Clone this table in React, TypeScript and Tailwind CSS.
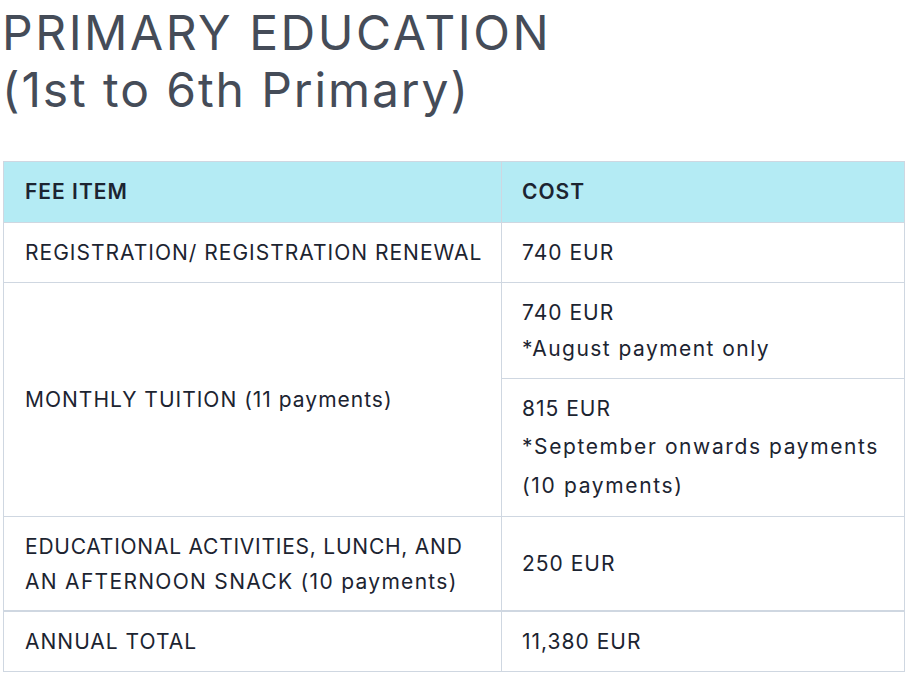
import React from "react";

const body = "font-['Inter','Liberation_Sans',sans-serif] text-[21px] tracking-[1px] text-[#1c2431]";

export default function App() {
  return (
    <div className="min-h-[678px] bg-white">
      <h1 className="mt-[4px] pl-[2px] font-['Inter','Liberation_Sans',sans-serif] text-[48px] leading-[57px] font-normal text-[#454c58]">
        <span className="tracking-[2.55px]">PRIMARY EDUCATION</span>
        <br />
        <span className="tracking-[1.9px]">(1st to 6th Primary)</span>
      </h1>
      <div className={`ml-[3px] mt-[43px] w-[902px] border border-[#cfd7e1] ${body}`}>
        <div className="flex h-[61px] border-b border-[#cfd7e1] bg-[#b4ebf4] font-semibold">
          <div className="flex w-[498px] items-center border-r border-[#cfd7e1] pl-[21px]">FEE ITEM</div>
          <div className="flex flex-1 items-center pl-[20px]">COST</div>
        </div>
        <div className="flex h-[60px] border-b border-[#cfd7e1]">
          <div className="flex w-[498px] items-center border-r border-[#cfd7e1] pl-[21px]">REGISTRATION/ REGISTRATION RENEWAL</div>
          <div className="flex flex-1 items-center pl-[20px]">740 EUR</div>
        </div>
        <div className="flex h-[234px] border-b border-[#cfd7e1]">
          <div className="flex w-[498px] items-center border-r border-[#cfd7e1] pl-[21px]">MONTHLY TUITION (11 payments)</div>
          <div className="flex flex-1 flex-col">
            <div className="flex h-[96px] flex-col justify-center border-b border-[#cfd7e1] pl-[20px] leading-[36px]">
              <span>740 EUR</span>
              <span className="tracking-[1.45px]">*August payment only</span>
            </div>
            <div className="flex flex-1 flex-col justify-center pl-[20px] leading-[38.5px]">
              <span>815 EUR</span>
              <span className="tracking-[1.6px]">*September onwards payments</span>
              <span className="tracking-[1.65px]">(10 payments)</span>
            </div>
          </div>
        </div>
        <div className="flex h-[95px] border-b-2 border-[#cfd7e1]">
          <div className="flex w-[498px] flex-col justify-center border-r border-[#cfd7e1] pl-[21px] leading-[35px]">
            <span className="tracking-[0.76px]">EDUCATIONAL ACTIVITIES, LUNCH, AND</span>
            <span className="tracking-[1.3px]">AN AFTERNOON SNACK (10 payments)</span>
          </div>
          <div className="flex flex-1 items-center pl-[20px]">250 EUR</div>
        </div>
        <div className="flex h-[59px]">
          <div className="flex w-[498px] items-center border-r border-[#cfd7e1] pl-[21px]">ANNUAL TOTAL</div>
          <div className="flex flex-1 items-center pl-[20px]">11,380 EUR</div>
        </div>
      </div>
    </div>
  );
}
